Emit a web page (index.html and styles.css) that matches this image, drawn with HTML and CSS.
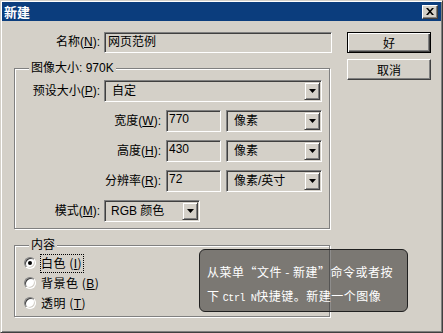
FILE: index.html
```html
<!DOCTYPE html>
<html>
<head>
<meta charset="utf-8">
<link rel="stylesheet" href="styles.css">
</head>
<body>
<div class="window">
  <div class="titlebar">
    <span class="title">新建</span>
    <span class="close"><svg width="8" height="7" viewBox="0 0 8 7"><path d="M0 0h2l2 2.3L6 0h2L5 3.5 8 7H6L4 4.7 2 7H0l3-3.5z" fill="#000"/></svg></span>
  </div>
  <div class="content">
    <div class="main">
      <div class="row name-row">
        <span class="lbl lbl-short">名称(<u>N</u>):</span>
        <div class="field field-name">网页范例</div>
      </div>
      <div class="group group-size">
        <div class="legend">图像大小: 970K</div>
        <div class="rows">
          <div class="row">
            <span class="lbl lbl-short">预设大小(<u>P</u>):</span>
            <div class="select sel-preset"><span class="val">自定</span><span class="arrow"><svg width="7" height="4" viewBox="0 0 7 4"><path d="M0 0h7L3.5 4z" fill="#000"/></svg></span></div>
          </div>
          <div class="row">
            <span class="lbl lbl-long">宽度(<u>W</u>):</span>
            <div class="field field-num">770</div>
            <div class="select sel-unit"><span class="val">像素</span><span class="arrow"><svg width="7" height="4" viewBox="0 0 7 4"><path d="M0 0h7L3.5 4z" fill="#000"/></svg></span></div>
          </div>
          <div class="row">
            <span class="lbl lbl-long">高度(<u>H</u>):</span>
            <div class="field field-num">430</div>
            <div class="select sel-unit"><span class="val">像素</span><span class="arrow"><svg width="7" height="4" viewBox="0 0 7 4"><path d="M0 0h7L3.5 4z" fill="#000"/></svg></span></div>
          </div>
          <div class="row">
            <span class="lbl lbl-long">分辨率(<u>R</u>):</span>
            <div class="field field-num">72</div>
            <div class="select sel-unit"><span class="val">像素/英寸</span><span class="arrow"><svg width="7" height="4" viewBox="0 0 7 4"><path d="M0 0h7L3.5 4z" fill="#000"/></svg></span></div>
          </div>
          <div class="row">
            <span class="lbl lbl-short">模式(<u>M</u>):</span>
            <div class="select sel-mode"><span class="val">RGB 颜色</span><span class="arrow"><svg width="7" height="4" viewBox="0 0 7 4"><path d="M0 0h7L3.5 4z" fill="#000"/></svg></span></div>
          </div>
        </div>
      </div>
      <div class="group group-content">
        <div class="legend">内容</div>
        <div class="radio-row"><span class="radio checked"></span><span class="rlbl focus">白色 (<u>I</u>)</span></div>
        <div class="radio-row"><span class="radio"></span><span class="rlbl">背景色 (<u>B</u>)</span></div>
        <div class="radio-row"><span class="radio"></span><span class="rlbl">透明 (<u>T</u>)</span></div>
      </div>
    </div>
    <div class="side">
      <div class="btn btn-default">好</div>
      <div class="btn">取消</div>
    </div>
  </div>
  <div class="tooltip">
    <div class="tip-line">从菜单“文件 - 新建”命令或者按</div>
    <div class="tip-line">下 <span class="mono">Ctrl N</span>快捷键。新建一个图像</div>
  </div>
</div>
</body>
</html>
```
FILE: styles.css
```css
body {
  margin: 0;
  background: #d4d0c8;
  font-family: "Liberation Sans", "Noto Sans CJK SC", sans-serif;
  font-size: 12px;
  color: #000;
}

.window {
  position: relative;
  width: 443px;
  height: 333px;
  box-sizing: border-box;
  border: 1px solid;
  border-color: #d4d0c8 #404040 #404040 #d4d0c8;
  box-shadow: inset 1px 1px #fff, inset -1px -1px #808080;
  padding: 1px;
  background: #d4d0c8;
}

.titlebar {
  height: 19px;
  background: #0b3d7d;
  display: flex;
  align-items: center;
  justify-content: space-between;
  padding: 0 3px 0 2px;
}

.title {
  color: #fff;
  font-weight: bold;
  font-size: 13px;
  font-family: "Noto Sans CJK SC", sans-serif;
  line-height: 19px;
}

.close {
  width: 16px;
  height: 14px;
  box-sizing: border-box;
  background: #d4d0c8;
  border: 1px solid;
  border-color: #fff #404040 #404040 #fff;
  box-shadow: inset -1px -1px #808080;
  display: flex;
  align-items: center;
  justify-content: center;
}

.content {
  display: flex;
  padding: 11px 0 0 12px;
}

.main {
  width: 318px;
}

.side {
  margin-left: 15px;
  width: 84px;
  display: flex;
  flex-direction: column;
  gap: 6px;
}

.row {
  display: flex;
  align-items: center;
  height: 22px;
}

.name-row {
  height: 21px;
}

.lbl {
  text-align: right;
  white-space: nowrap;
  line-height: 21px;
}

.name-row .lbl {
  width: 86px;
  margin-right: 4px;
}

.lbl-short {
  width: 85px;
  margin-right: 4px;
}

.lbl-long {
  width: 146px;
  margin-right: 5px;
}

.field,
.select {
  box-sizing: border-box;
  height: 22px;
  border: 1px solid;
  border-color: #808080 #fff #fff #808080;
  box-shadow: inset 1px 1px #404040, inset -1px -1px #d4d0c8;
  background: #d4d0c8;
  white-space: nowrap;
}

.field {
  padding: 0 3px;
  line-height: 18px;
}

.field-name {
  width: 228px;
  height: 21px;
}

.field-num {
  width: 55px;
  margin-right: 5px;
  padding-left: 2px;
  line-height: 16px;
}

.select {
  display: flex;
  align-items: stretch;
  padding: 1px;
}

.select .val {
  flex: 1;
  line-height: 19px;
  padding-left: 6px;
}

.sel-preset {
  width: 218px;
}

.sel-unit {
  width: 96px;
}

.sel-mode {
  width: 96px;
}

.sel-mode .val {
  padding-left: 5px;
}

.arrow {
  width: 16px;
  box-sizing: border-box;
  border: 1px solid;
  border-color: #d4d0c8 #404040 #404040 #d4d0c8;
  box-shadow: inset 1px 1px #fff, inset -1px -1px #808080;
  display: flex;
  align-items: center;
  justify-content: center;
}

.group {
  box-sizing: border-box;
  width: 316px;
  border: 1px solid #808080;
  box-shadow: 1px 1px 0 #fff, inset 1px 1px 0 #fff;
  display: flex;
  flex-direction: column;
}

.legend {
  align-self: flex-start;
  margin: -8px 0 0 14px;
  padding: 0 2px;
  background: #d4d0c8;
  line-height: 14px;
  height: 14px;
  white-space: nowrap;
}

.group-size {
  margin-top: 15px;
  padding-bottom: 6px;
}

.group-size .legend {
  margin-bottom: 5px;
}

.rows {
  display: flex;
  flex-direction: column;
  gap: 8px;
}

.group-content {
  margin-top: 16px;
  padding-bottom: 3px;
}

.group-content .legend {
  margin-bottom: 1px;
}

.radio-row {
  display: flex;
  align-items: center;
  height: 20px;
  padding-left: 9px;
}

.radio {
  position: relative;
  width: 12px;
  height: 12px;
  box-sizing: border-box;
  border-radius: 50%;
  border: 1px solid;
  border-color: #808080 #fff #fff #808080;
  box-shadow: inset 1px 1px #404040, inset -1px -1px #d4d0c8;
  background: #fff;
  margin-right: 4px;
}

.radio.checked::after {
  content: "";
  position: absolute;
  left: 3px;
  top: 3px;
  width: 4px;
  height: 4px;
  border-radius: 50%;
  background: #000;
}

.rlbl {
  font-family: "Noto Sans CJK SC", sans-serif;
  line-height: 15px;
  border: 1px dotted transparent;
  padding: 0 1px 0 0;
  white-space: nowrap;
  letter-spacing: 0.5px;
}

.rlbl u {
  font-family: "Liberation Sans", sans-serif;
}

.rlbl.focus {
  border-color: #000;
}

.btn {
  box-sizing: border-box;
  width: 84px;
  height: 21px;
  border: 1px solid;
  border-color: #fff #404040 #404040 #fff;
  box-shadow: inset -1px -1px #808080;
  display: flex;
  align-items: center;
  justify-content: center;
  font-family: "Noto Sans CJK SC", sans-serif;
  line-height: 19px;
}

.btn-default {
  border-color: #000;
  box-shadow: inset 1px 1px #fff, inset -1px -1px #404040, inset -2px -2px #808080;
}

.tooltip {
  position: absolute;
  left: 198px;
  top: 248px;
  width: 209px;
  height: 63px;
  box-sizing: border-box;
  border: 1px solid #202020;
  border-radius: 6px;
  background: rgba(50, 48, 45, 0.55);
  color: #fff;
  padding: 10px 0 0 7px;
  font-family: "Noto Sans CJK SC", sans-serif;
  font-size: 12px;
  line-height: 24px;
}

.tip-line {
  white-space: nowrap;
  letter-spacing: 0.5px;
}

.mono {
  font-family: "Liberation Mono", monospace;
  font-size: 10px;
  letter-spacing: -0.4px;
}
```
